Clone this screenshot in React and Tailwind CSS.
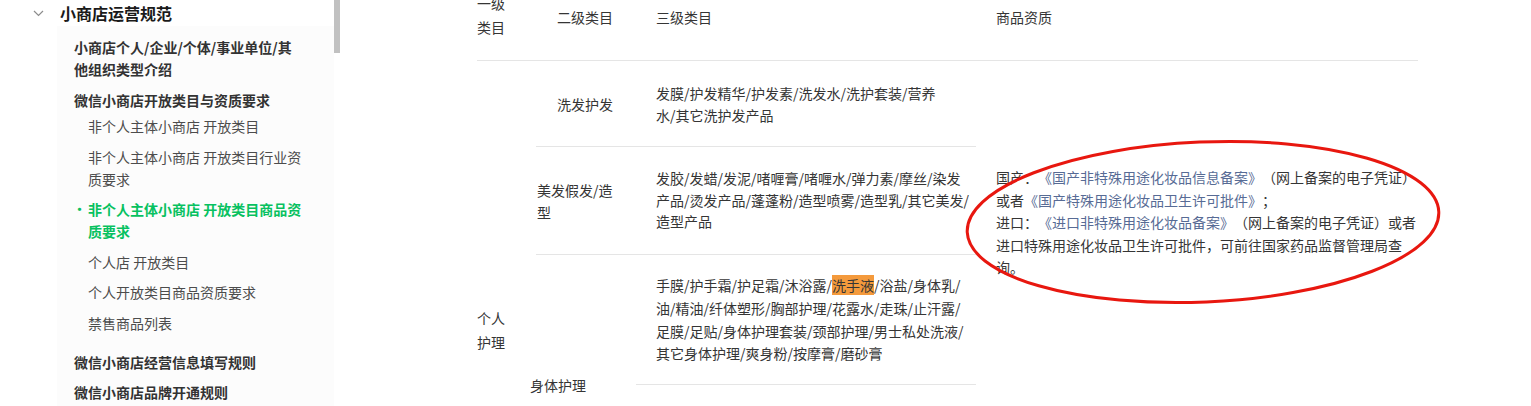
import React from 'react';

const font = { fontFamily: '"Noto Sans CJK SC", "Noto Sans", sans-serif' };

const Chevron = () => (
  <svg width="11" height="7" viewBox="0 0 11 7" className="text-[#8c8c8c]">
    <path d="M1 1l4.5 4.5L10 1" fill="none" stroke="currentColor" strokeWidth="1.2" />
  </svg>
);

const SubItem = ({ children, active }) => (
  <div
    className={`relative py-[4.25px] leading-[22px] ${
      active ? 'font-bold text-[#07c160]' : 'text-[#4c4c4c]'
    }`}
  >
    {active && <span className="absolute left-[-15px] top-[4px] text-[13px]">•</span>}
    {children}
  </div>
);

const Sidebar = () => (
  <aside className="flex w-[340px] shrink-0">
    <div className="w-[334px]">
      <div className="flex h-[26px] items-center">
        <span className="ml-[33px] flex w-[11px]">
          <Chevron />
        </span>
        <span className="ml-[16px] -mt-[1px] text-[16px] font-semibold text-[#1a1a1a]">小商店运营规范</span>
      </div>
      <div className="ml-[57px] h-[400px] bg-[#fcfcfc] pt-[10px] text-[14px]">
        <div className="mb-[9px] pl-[17px] pr-[34px] font-bold leading-[22px] text-[#333]">
          小商店个人/企业/个体/事业单位/其他组织类型介绍
        </div>
        <div className="pl-[17px] pr-[34px] font-bold leading-[22px] text-[#333]">
          微信小商店开放类目与资质要求
        </div>
        <div className="pl-[31px] pr-[28px]">
          <SubItem>非个人主体小商店 开放类目</SubItem>
          <SubItem>非个人主体小商店 开放类目行业资质要求</SubItem>
          <SubItem active>非个人主体小商店 开放类目商品资质要求</SubItem>
          <SubItem>个人店 开放类目</SubItem>
          <SubItem>个人开放类目商品资质要求</SubItem>
          <SubItem>禁售商品列表</SubItem>
        </div>
        <div className="mt-[13px] mb-[8px] pl-[17px] font-bold leading-[22px] text-[#333]">
          微信小商店经营信息填写规则
        </div>
        <div className="pl-[17px] font-bold leading-[22px] text-[#333]">微信小商店品牌开通规则</div>
      </div>
    </div>
    <div className="h-[53px] w-[6px] bg-[#c1c1c1]" />
  </aside>
);

const Link = ({ children }) => <span className="text-[#576b95]">{children}</span>;

const Table = () => (
  <div className="w-[941px] text-[14px] text-[#353535] [text-spacing-trim:space-all]">
    <div className="flex h-[61px] border-b border-[#e5e5e5]">
      <div className="-mt-[9px] w-[59px] leading-[24px]">
        一级
        <br />
        类目
      </div>
      <div className="w-[100px] pl-[21px] pt-[6px] leading-[22px]">二级类目</div>
      <div className="w-[340px] pl-[20px] pt-[6px] leading-[22px]">三级类目</div>
      <div className="w-[442px] pl-[20px] pt-[6px] leading-[22px]">商品资质</div>
    </div>

    <div className="flex">
      <div className="w-[59px] pt-[245px] leading-[24px]">
        个人
        <br />
        护理
      </div>

      <div className="grid w-[440px] grid-cols-[100px_340px] grid-rows-[86px_108px_130px_130px]">
        <div className="flex items-center border-b border-[#e5e5e5] pl-[21px] leading-[22px]">洗发护发</div>
        <div className="flex items-center border-b border-[#e5e5e5] pl-[20px] leading-[22px]">
          <div>
            发膜/护发精华/护发素/洗发水/洗护套装/营养
            <br />
            水/其它洗护发产品
          </div>
        </div>

        <div className="flex items-center border-b border-[#e5e5e5] pl-[1px] leading-[22px]">
          <div>
            美发假发/造
            <br />
            型
          </div>
        </div>
        <div className="flex items-center border-b border-[#e5e5e5] pl-[20px] leading-[21.5px]">
          <div>
            发胶/发蜡/发泥/啫喱膏/啫喱水/弹力素/摩丝/染发
            <br />
            产品/烫发产品/蓬蓬粉/造型喷雾/造型乳/其它美发/
            <br />
            造型产品
          </div>
        </div>

        <div className="row-span-2 flex items-center leading-[22px]">
          <span className="-ml-[6px]">身体护理</span>
        </div>
        <div className="flex items-center border-b border-[#e5e5e5] pl-[20px] leading-[22.6px]">
          <div>
            手膜/护手霜/护足霜/沐浴露/<mark className="bg-[#f49a3c] text-[#353535]">洗手液</mark>/浴盐/身体乳/
            <br />
            油/精油/纤体塑形/胸部护理/花露水/走珠/止汗露/
            <br />
            足膜/足贴/身体护理套装/颈部护理/男士私处洗液/
            <br />
            其它身体护理/爽身粉/按摩膏/磨砂膏
          </div>
        </div>
        <div />
      </div>

      <div className="w-[442px] pl-[20px] pt-[105px] leading-[22.5px]">
        国产：<Link>《国产非特殊用途化妆品信息备案》</Link>（网上备案的电子凭证）
        <br />
        或者<Link>《国产特殊用途化妆品卫生许可批件》</Link>；
        <br />
        进口：<Link>《进口非特殊用途化妆品备案》</Link>（网上备案的电子凭证）或者
        <br />
        进口特殊用途化妆品卫生许可批件，可前往国家药品监督管理局查
        <br />
        询。
      </div>
    </div>
  </div>
);

export default function App() {
  return (
    <div className="relative h-[406px] w-[1531px] overflow-hidden bg-white" style={font}>
      <div className="flex">
        <Sidebar />
        <main className="pl-[137px]">
          <Table />
        </main>
      </div>
      <svg
        className="pointer-events-none absolute left-[960px] top-[135px]"
        width="490"
        height="175"
        viewBox="0 0 490 175"
      >
        <ellipse
          cx="243"
          cy="87"
          rx="236"
          ry="80"
          transform="rotate(-2.5 243 87)"
          fill="none"
          stroke="#e8170f"
          strokeWidth="3"
        />
      </svg>
    </div>
  );
}
